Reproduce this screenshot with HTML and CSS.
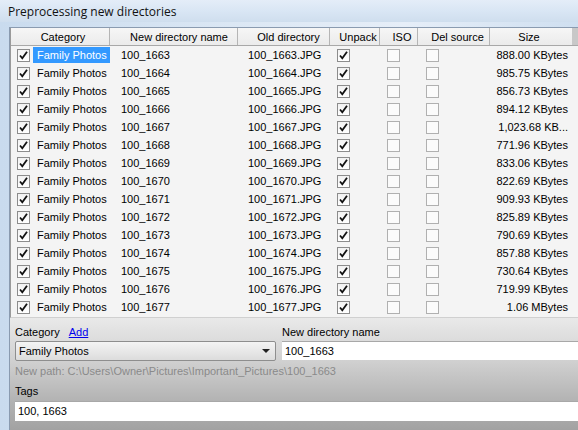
FILE: index.html
```html
<!DOCTYPE html>
<html>
<head>
<meta charset="utf-8">
<link rel="stylesheet" href="styles.css">
</head>
<body>
<div class="window">
  <div class="titlebar">Preprocessing new directories</div>
  <div class="frame">
    <div class="client">
      <div class="grid">
        <div class="row head">
          <div class="c c1">Category</div>
          <div class="c c2">New directory name</div>
          <div class="c c3">Old directory</div>
          <div class="c c4">Unpack</div>
          <div class="c c5">ISO</div>
          <div class="c c6">Del source</div>
          <div class="c c7">Size</div>
          <div class="c c8"></div>
        </div>
        <div id="rows"></div>
      </div>
      <div class="panel">
        <div class="fields">
          <div class="field left">
            <div class="label">Category <a class="link">Add</a></div>
            <div class="combo"><span>Family Photos</span><span class="arrow"></span></div>
          </div>
          <div class="field right">
            <div class="label">New directory name</div>
            <div class="input">100_1663</div>
          </div>
        </div>
        <div class="path">New path: C:\Users\Owner\Pictures\Important_Pictures\100_1663</div>
        <div class="label tags-label">Tags</div>
        <div class="input tags">100, 1663</div>
      </div>
    </div>
  </div>
</div>
<script>
const sizes=["888.00 KBytes","985.75 KBytes","856.73 KBytes","894.12 KBytes","1,023.68 KB...","771.96 KBytes","833.06 KBytes","822.69 KBytes","909.93 KBytes","825.89 KBytes","790.69 KBytes","857.88 KBytes","730.64 KBytes","719.99 KBytes","1.06 MBytes"];
const chk='<span class="cb"><svg width="11" height="11" viewBox="0 0 11 11"><path d="M2 5.5 L4.3 8.3 L9 1.8" fill="none" stroke="#111" stroke-width="1.8"/></svg></span>';
const empty='<span class="cb empty"></span>';
let h='';
for(let i=0;i<15;i++){
  const n=1663+i;
  h+='<div class="row'+(i===0?' sel':'')+'">'+
  '<div class="c c1">'+chk+'<span class="cat">Family Photos</span></div>'+
  '<div class="c c2">100_'+n+'</div>'+
  '<div class="c c3">100_'+n+'.JPG</div>'+
  '<div class="c c4">'+chk+'</div>'+
  '<div class="c c5">'+empty+'</div>'+
  '<div class="c c6">'+empty+'</div>'+
  '<div class="c c7">'+sizes[i]+'</div>'+
  '<div class="c c8"></div></div>';
}
document.getElementById('rows').innerHTML=h;
</script>
</body>
</html>
```
FILE: styles.css
```css
html,body{margin:0;padding:0;}
body{width:578px;height:430px;overflow:hidden;font-family:"Liberation Sans",Arial,sans-serif;font-size:11px;color:#000;}
.window{display:flex;flex-direction:column;height:430px;background:linear-gradient(90deg,#c9dbee,#dbe7f4 40%,#e6eef8 70%,#cfdff0);}
.titlebar{height:22px;line-height:24px;padding-left:8px;font-family:"Open Sans","Noto Sans",sans-serif;font-size:12px;color:#111;background:linear-gradient(180deg,#e4edf8 0%,#d9e6f4 50%,#cfdeee 100%);}
.frame{flex:1;display:flex;padding:5px 0 0 9px;min-height:0;}
.client{flex:1;display:flex;flex-direction:column;border-left:1px solid #8a9bb0;border-top:1px solid #8a9bb0;background:#f0f0f0;}
.grid{background:#f4f4f4;border-left:1px solid #9a9a9a;height:289px;overflow:hidden;border-bottom:1px solid #d0d0d0;}
.row{display:flex;height:18px;align-items:center;}
.row.head{height:17px;background:linear-gradient(180deg,#f6f6f6,#ebebeb);border-bottom:1px solid #a8a8a8;}
.c{box-sizing:border-box;height:100%;display:flex;align-items:center;white-space:nowrap;overflow:hidden;}
.head .c{justify-content:center;border-right:1px solid #b5b5b5;}
.c1{width:99px;padding-left:6px;}
.c2{width:128px;padding-left:11px;}
.c3{width:92px;padding-left:10px;}
.c4{width:50px;padding-left:7px;}
.c5{width:38px;padding-left:7px;}
.c6{width:72px;padding-left:8px;}
.c7{width:82px;justify-content:flex-end;padding-right:4px;}
.c8{flex:1;}
.head .c8{background:#c8c8c8;border-right:none;}
.head .c7{border-right:none;}
.cb{width:11px;height:11px;border:1px solid #8c8c8c;background:linear-gradient(180deg,#f2f2f2,#ffffff);display:inline-flex;align-items:center;justify-content:center;flex:none;}
.cb.empty{border-color:#b0b0b0;background:#fbfbfb;}
.cat{flex:1;margin-left:3px;padding:2px 0 2px 4px;height:12px;line-height:12px;overflow:hidden;}
.sel .cat{background:#3399ff;color:#fff;}
.panel{flex:1;background:linear-gradient(180deg,#e9e9e9 0%,#cfcfcf 40%,#b2b2b2 75%,#a2a2a2 100%);padding:7px 0 0 5px;display:flex;flex-direction:column;}
.fields{display:flex;}
.field{display:flex;flex-direction:column;}
.left{width:261px;margin-right:6px;}
.right{flex:1;}
.label{height:16px;line-height:14px;}
.link{color:#0000ee;text-decoration:underline;margin-left:6px;}
.combo{height:18px;border:1px solid #8e8e8e;border-radius:2px;background:linear-gradient(180deg,#f4f4f4,#dcdcdc);display:flex;align-items:center;justify-content:space-between;padding:0 5px 0 3px;}
.arrow{width:0;height:0;border-left:4px solid transparent;border-right:4px solid transparent;border-top:4px solid #222;}
.input{height:18px;background:#fff;border-top:1px solid #a8a8a8;line-height:18px;padding-left:3px;}
.path{color:#8a8a8a;height:20px;line-height:20px;}
.tags-label{margin-top:2px;height:18px;line-height:16px;}
.tags{height:19px;}
```
